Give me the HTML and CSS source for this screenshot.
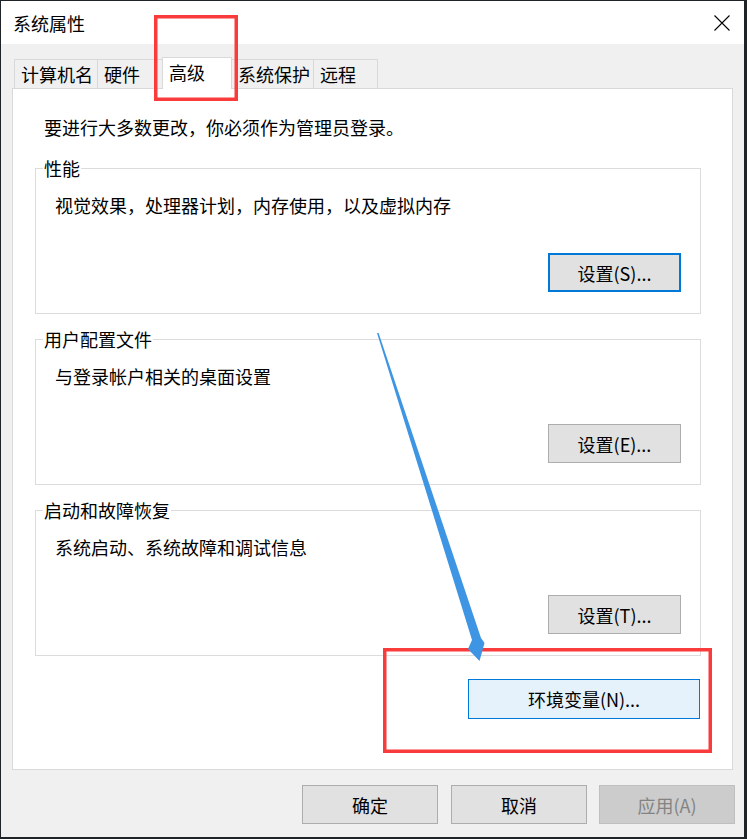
FILE: index.html
```html
<!DOCTYPE html>
<html lang="zh-CN">
<head>
<meta charset="utf-8">
<title>系统属性</title>
<link rel="stylesheet" href="styles.css">
</head>
<body>
<div class="window">
  <div class="titlebar">
    <span class="title">系统属性</span>
    <svg class="close" width="16" height="16" viewBox="0 0 16 16">
      <path d="M0.5 0.5 L15.5 15.5 M15.5 0.5 L0.5 15.5" stroke="#000" stroke-width="1.1" fill="none"/>
    </svg>
  </div>
  <div class="content">
    <div class="tabs">
      <div class="tab t1">计算机名</div>
      <div class="tab t2">硬件</div>
      <div class="tab t3 selected">高级</div>
      <div class="tab t4">系统保护</div>
      <div class="tab t5">远程</div>
    </div>
    <div class="panel">
      <p class="intro">要进行大多数更改，你必须作为管理员登录。</p>
      <fieldset class="group">
        <legend>性能</legend>
        <p class="desc">视觉效果，处理器计划，内存使用，以及虚拟内存</p>
        <div class="row"><button class="btn focused">设置(S)...</button></div>
      </fieldset>
      <fieldset class="group">
        <legend>用户配置文件</legend>
        <p class="desc">与登录帐户相关的桌面设置</p>
        <div class="row"><button class="btn">设置(E)...</button></div>
      </fieldset>
      <fieldset class="group">
        <legend>启动和故障恢复</legend>
        <p class="desc">系统启动、系统故障和调试信息</p>
        <div class="row"><button class="btn">设置(T)...</button></div>
      </fieldset>
      <div class="env-row"><button class="btn env">环境变量(N)...</button></div>
    </div>
    <div class="footer">
      <button class="btn fbtn">确定</button>
      <button class="btn fbtn f2">取消</button>
      <button class="btn fbtn f3 disabled">应用(A)</button>
    </div>
  </div>
</div>
<svg class="overlay" width="747" height="839" viewBox="0 0 747 839">
  <rect x="155.75" y="16.75" width="80.5" height="82.5" fill="none" stroke="#fa3b3b" stroke-width="3.5"/>
  <rect x="384.75" y="649.75" width="325.5" height="101.5" fill="none" stroke="#fa3b3b" stroke-width="3.5"/>
  <polygon points="377,333 378.6,333 481,638 484.5,643 479.5,661 468,649 472,640" fill="#3d95e3"/>
</svg>
</body>
</html>
```

FILE: styles.css
```css
html, body {
  margin: 0;
  padding: 0;
}
body {
  background: #1e2328;
  width: 747px;
  height: 839px;
  overflow: hidden;
  position: relative;
  font-family: "Noto Sans CJK SC", "Noto Sans", sans-serif;
  font-size: 18px;
  color: #000;
}
.window {
  margin: 1px 3px 2px 1px;
  width: 743px;
  height: 836px;
  background: #f0f0f0;
  display: flex;
  flex-direction: column;
  overflow: hidden;
}
.titlebar {
  height: 43px;
  background: #fff;
  display: flex;
  align-items: center;
  justify-content: space-between;
  padding-left: 12px;
  flex: none;
}
.title {
  line-height: 24px;
}
.close {
  margin-right: 14px;
  display: block;
}
.content {
  padding: 0 11px;
  display: flex;
  flex-direction: column;
}
.tabs {
  margin-top: 13px;
  height: 31px;
  display: flex;
  align-items: flex-end;
  padding-left: 2px;
}
.tab {
  box-sizing: border-box;
  height: 29px;
  border: 1px solid #d9d9d9;
  border-bottom: none;
  background: #f0f0f0;
  padding-left: 6px;
  line-height: 28px;
  white-space: nowrap;
  position: relative;
}
.t1 { width: 84px; }
.t2 { width: 68px; margin-left: -1px; }
.t3 { width: 70px; margin-left: -3px; }
.t4 { width: 83px; margin-left: -1px; }
.t5 { width: 65px; margin-left: -1px; }
.tab.selected {
  height: 32px;
  background: #fff;
  z-index: 2;
  margin-bottom: -1px;
  line-height: 28px;
  padding-bottom: 3px;
}
.panel {
  box-sizing: border-box;
  background: #fff;
  border: 1px solid #d9d9d9;
  padding: 26px 31px 50px 22px;
  display: flex;
  flex-direction: column;
}
.intro {
  margin: 0;
  padding-left: 9px;
  line-height: 24px;
}
.group {
  margin: 18px 0 0 0;
  padding: 0 19px 21px 0;
  border: 1px solid #dcdcdc;
  min-inline-size: 0;
}
.group + .group {
  margin-top: 14px;
}
.group legend {
  margin-left: 7px;
  padding: 0 1px;
  line-height: 23px;
}
.desc {
  margin: 13px 0 0 0;
  padding-left: 19px;
  line-height: 24px;
}
.row {
  display: flex;
  justify-content: flex-end;
  margin-top: 36px;
}
.btn {
  box-sizing: border-box;
  font-family: inherit;
  font-size: 18px;
  color: #000;
  background: #e1e1e1;
  border: 1px solid #adadad;
  width: 133px;
  height: 39px;
  padding: 0;
  margin: 0;
  line-height: 24px;
}
.btn.focused {
  border: 2px solid #0078d7;
}
.env-row {
  display: flex;
  justify-content: flex-end;
  margin-top: 23px;
  padding-right: 1px;
}
.btn.env {
  width: 232px;
  height: 40px;
  background: #e5f1fb;
  border-color: #0078d7;
}
.footer {
  margin-top: 15px;
  margin-right: -2px;
  display: flex;
  justify-content: flex-end;
}
.btn.fbtn {
  width: 136px;
  height: 39px;
}
.btn.f2 {
  margin-left: 13px;
}
.btn.f3 {
  margin-left: 12px;
}
.btn.disabled {
  background: #cccccc;
  border-color: #bfbfbf;
  color: #838383;
}
.overlay {
  position: absolute;
  top: 0;
  left: 0;
  pointer-events: none;
}
```
